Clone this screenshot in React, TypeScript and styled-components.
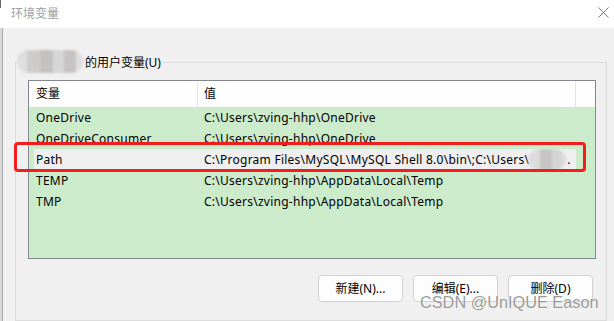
import React from "react";
import styled, { createGlobalStyle } from "styled-components";

const GlobalStyle = createGlobalStyle`
  html, body {
    margin: 0;
    padding: 0;
    background: #f0f0f0;
  }
  body {
    width: 614px;
    height: 321px;
    overflow: hidden;
    font-family: "Noto Sans", "Noto Sans CJK SC", sans-serif;
    font-size: 12px;
    color: #000;
  }
`;

const rows = [
  { name: "OneDrive", value: "C:\\Users\\zving-hhp\\OneDrive" },
  { name: "OneDriveConsumer", value: "C:\\Users\\zving-hhp\\OneDrive" },
  { name: "Path", value: "C:\\Program Files\\MySQL\\MySQL Shell 8.0\\bin\\;C:\\Users\\", hidden: true, selected: true },
  { name: "TEMP", value: "C:\\Users\\zving-hhp\\AppData\\Local\\Temp" },
  { name: "TMP", value: "C:\\Users\\zving-hhp\\AppData\\Local\\Temp" },
];

export default function App() {
  return (
    <>
      <GlobalStyle />
      <Window>
        <TitleBar>
          <TitleEdge />
          <Title>环境变量</Title>
          <CloseBtn>
            <svg width="11" height="11" viewBox="0 0 11 11">
              <path d="M0.5 0.5 L10.5 10.5 M10.5 0.5 L0.5 10.5" stroke="#7a7a7a" strokeWidth="1" fill="none" />
            </svg>
          </CloseBtn>
        </TitleBar>
        <Body>
          <EdgeStrip />
          <GroupBox>
            <Caption>
              <Smudge $w={66} $h={23} />
              <span>的用户变量(U)</span>
            </Caption>
            <ListView>
              <Header>
                <HeadCell $w={169} $pad={7}>变量</HeadCell>
                <HeadCell $w={378} $pad={6}>值</HeadCell>
                <HeadFill />
              </Header>
              {rows.map((r) => (
                <Row key={r.name}>
                  <RowBody $selected={!!r.selected}>
                    <Cell $w={164} $pad={2}>{r.name}</Cell>
                    <Cell $w={378} $pad={6}>
                      {r.value}
                      {r.hidden && (
                        <>
                          <InlineSmudge />.
                        </>
                      )}
                    </Cell>
                  </RowBody>
                </Row>
              ))}
            </ListView>
            <Buttons>
              <Button>新建(N)...</Button>
              <Button>编辑(E)...</Button>
              <Button>删除(D)</Button>
            </Buttons>
          </GroupBox>
        </Body>
        <RedMark />
        <Watermark>CSDN @UnIQUE Eason</Watermark>
      </Window>
    </>
  );
}

const Window = styled.div`
  position: relative;
  width: 614px;
  height: 321px;
  display: flex;
  flex-direction: column;
  overflow: hidden;
`;

const TitleBar = styled.div`
  height: 28px;
  background: #fff;
  display: flex;
  align-items: center;
  flex-shrink: 0;
`;

const TitleEdge = styled.div`
  align-self: flex-start;
  width: 1px;
  height: 8px;
  background: #6a6a6a;
`;

const Title = styled.div`
  margin-left: 10px;
  padding-bottom: 2px;
  color: #a0a0a0;
  font-size: 12px;
  flex: 1;
`;

const CloseBtn = styled.div`
  width: 11px;
  height: 11px;
  margin-right: 5px;
  margin-bottom: 4px;
  display: flex;
`;

const Body = styled.div`
  flex: 1;
  display: flex;
  background: #f0f0f0;
  padding: 34px 7px 2px 0;
`;

const EdgeStrip = styled.div`
  width: 3px;
  margin-top: -34px;
  margin-bottom: -2px;
  background: linear-gradient(to right, #d8d8d8 0 2px, #ababab 2px 3px);
  margin-right: 12px;
`;

const GroupBox = styled.div`
  position: relative;
  flex: 1;
  border: 1px solid #dcdcdc;
  padding: 17px 10px 18px 12px;
  display: flex;
  flex-direction: column;
`;

const Caption = styled.div`
  position: absolute;
  left: 1px;
  top: -13px;
  height: 23px;
  display: flex;
  align-items: center;
  background: #f0f0f0;
  padding-right: 2px;
  gap: 2px;
  color: #000;
`;

const Smudge = styled.div<{ $w: number; $h: number }>`
  width: ${(p) => p.$w}px;
  height: ${(p) => p.$h}px;
  border-radius: 12px;
  background: linear-gradient(
    to right,
    #dedede 0 10px,
    #cfcccc 10px 23px,
    #c6c1c1 23px 36px,
    #d4d6d8 36px 47px,
    #c8c3c3 47px 59px,
    #dedede 59px
  );
  filter: blur(1.2px);
`;

const ListView = styled.div`
  height: 177px;
  border: 1px solid #828790;
  background: #ccebcb;
  display: flex;
  flex-direction: column;
  overflow: hidden;
`;

const Header = styled.div`
  height: 26px;
  flex-shrink: 0;
  background: #fff;
  display: flex;
`;

const HeadCell = styled.div<{ $w: number; $pad: number }>`
  width: ${(p) => p.$w}px;
  padding-left: ${(p) => p.$pad}px;
  box-sizing: border-box;
  border-right: 1px solid #e5e5e5;
  display: flex;
  align-items: center;
  padding-bottom: 2px;
`;

const HeadFill = styled.div`
  flex: 1;
`;

const Row = styled.div`
  height: 21px;
  flex-shrink: 0;
  padding-left: 5px;
  display: flex;
`;

const RowBody = styled.div<{ $selected: boolean }>`
  display: flex;
  background: ${(p) => (p.$selected ? "#efefef" : "transparent")};
`;

const Cell = styled.div<{ $w: number; $pad: number }>`
  width: ${(p) => p.$w}px;
  padding-left: ${(p) => p.$pad}px;
  box-sizing: border-box;
  white-space: nowrap;
  overflow: hidden;
  display: flex;
  align-items: center;
  letter-spacing: 0.25px;
`;

const InlineSmudge = styled.span`
  display: inline-block;
  width: 38px;
  height: 21px;
  margin-left: -1px;
  margin-right: 1px;
  border-radius: 11px;
  background: linear-gradient(to right, #dcdcdc 0 12px, #c8c4c4 12px 24px, #d2d4d6 24px 33px, #dcdcdc 33px);
  filter: blur(1.2px);
`;

const Buttons = styled.div`
  margin-top: 16px;
  display: flex;
  justify-content: flex-end;
  gap: 10px;
  padding-right: 3px;
`;

const Button = styled.div`
  width: 85px;
  height: 27px;
  box-sizing: border-box;
  background: #fdfdfd;
  border: 1px solid #d0d0d0;
  border-radius: 4px;
  display: flex;
  align-items: center;
  justify-content: center;
  padding-bottom: 1px;
`;

const RedMark = styled.div`
  position: absolute;
  left: 14px;
  top: 142px;
  width: 572px;
  height: 30px;
  box-sizing: border-box;
  border: 3px solid #f41d1d;
  border-radius: 4px;
  pointer-events: none;
`;

const Watermark = styled.div`
  position: absolute;
  left: 420px;
  top: 294px;
  font-family: "Liberation Sans", Arial, sans-serif;
  font-size: 16.3px;
  line-height: 16.3px;
  color: rgba(110, 110, 110, 0.7);
  text-shadow: 0 0 1px rgba(255, 255, 255, 0.9);
  white-space: nowrap;
`;
